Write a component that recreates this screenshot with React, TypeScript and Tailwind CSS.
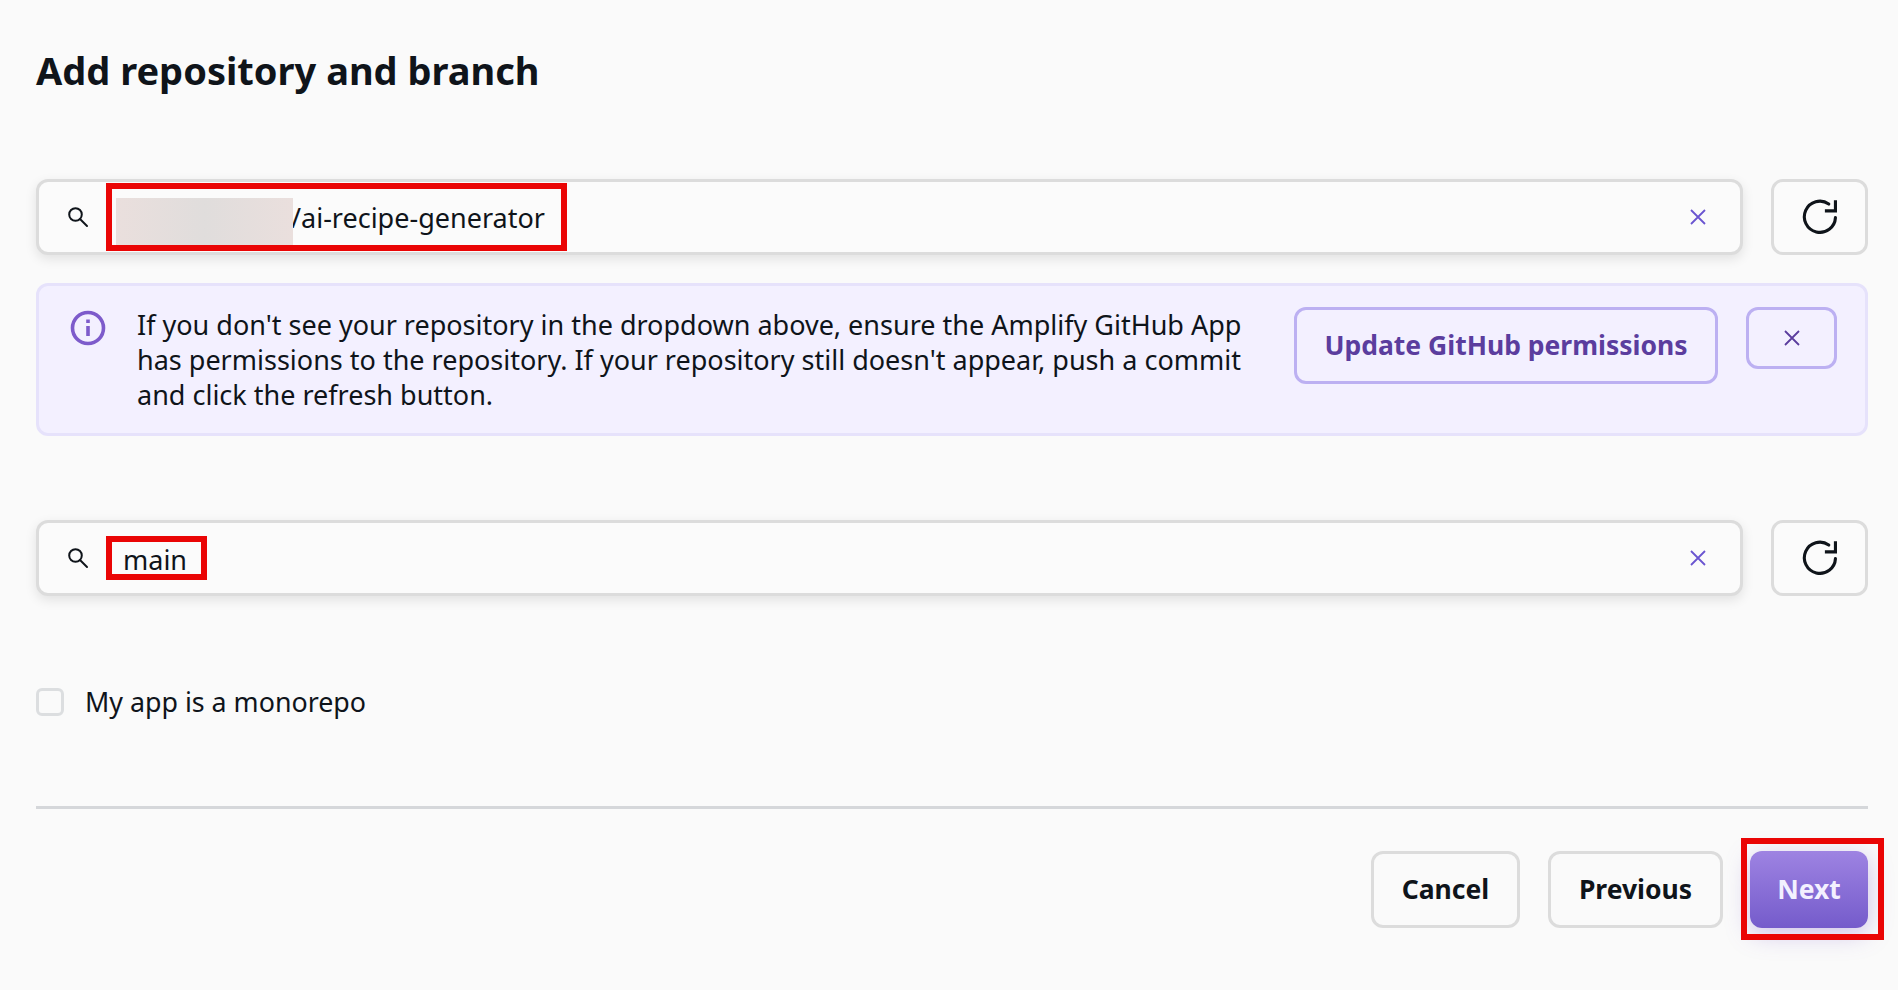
import React from 'react';

const font = { fontFamily: '"Noto Sans", sans-serif' };

const SearchIcon = () => (
  <svg width="24" height="24" viewBox="0 0 24 24" fill="none" stroke="#0f141a" strokeWidth="2">
    <circle cx="9.5" cy="9.5" r="6.3" />
    <path d="M14 14l7 7" strokeLinecap="round" />
  </svg>
);

const CloseIcon = ({ color, size = 18 }: { color: string; size?: number }) => (
  <svg width={size} height={size} viewBox="0 0 18 18" fill="none" stroke={color} strokeWidth="1.8">
    <path d="M2 2l14 14M16 2L2 16" />
  </svg>
);

const RefreshButton = () => (
  <button className="flex h-[76px] w-[97px] shrink-0 items-center justify-center rounded-xl border-[3px] border-[#dcdcdc] bg-[#fbfbfb]">
    <svg className="ml-[2px]" width="40" height="40" viewBox="0 0 36 36" fill="none" stroke="#0f141a" strokeWidth="2.8">
      <path d="M31 18.5A14 14 0 1 1 25 6.3" strokeLinecap="round" />
      <path d="M31 3v9.5h-9.5" />
    </svg>
  </button>
);

const SearchField = ({ children }: { children: React.ReactNode }) => (
  <div className="flex items-center gap-[15px] h-[76px] flex-1 rounded-xl border-[3px] border-[#dcdcdc] bg-[#fbfbfb] pl-[27px] pr-[33px] shadow-[0_4px_12px_rgba(0,0,0,0.1)]">
    <SearchIcon />
    <div className="flex-1 flex items-center">{children}</div>
    <CloseIcon color="#6a55d0" />
  </div>
);

const App: React.FC = () => (
  <div className="min-h-[990px] bg-[#fafafa] pl-9 pr-[30px] text-[#0f141a] overflow-hidden" style={font}>
    <h1 className="pt-[45px] text-[38px] leading-[50px] font-bold">Add repository and branch</h1>

    <div className="mt-[84px] flex gap-7">
      <SearchField>
        <div className="ml-[1px] flex h-[68px] w-[461px] items-center border-[6px] border-[#ea0505] pl-[2px]">
          <div className="relative z-10 mt-[8px] ml-[2px] h-[47px] w-[177px] bg-gradient-to-r from-[#eadfdd] via-[#e0dddc] to-[#eadfdd]" />
          <span className="-ml-[2px] pt-[3px] text-[27px]">/ai-recipe-generator</span>
        </div>
      </SearchField>
      <RefreshButton />
    </div>

    <div className="mt-[28px] flex h-[153px] rounded-xl border-[3px] border-[#e6e2fb] bg-[#f3f0ff] pl-[31px] pr-[28px] pt-[21px]">
      <svg className="mt-[3px] shrink-0" width="36" height="36" viewBox="0 0 36 36" fill="none" stroke="#7d5bcb" strokeWidth="3.6">
        <circle cx="18" cy="18" r="15.5" />
        <path d="M18 16v10" />
        <path d="M18 9.5v3.5" />
      </svg>
      <p className="ml-[31px] w-[1150px] text-[27px] leading-[35px]">
        If you don't see your repository in the dropdown above, ensure the Amplify GitHub App has permissions to the repository. If your repository still doesn't appear, push a commit and click the refresh button.
      </p>
      <button className="ml-auto flex h-[77px] w-[424px] shrink-0 items-center justify-center rounded-xl border-[3px] border-[#bcb0f2] text-[26.5px] font-bold text-[#5b3d9e]">
        Update GitHub permissions
      </button>
      <button className="ml-[28px] flex h-[62px] w-[91px] shrink-0 items-center justify-center rounded-xl border-[3px] border-[#bcb0f2]">
        <CloseIcon color="#5b3d9e" />
      </button>
    </div>

    <div className="mt-[84px] flex gap-7">
      <SearchField>
        <div className="ml-[1px] flex h-[44px] w-[101px] items-center border-[6px] border-[#ea0505] pl-[11px]">
          <span className="pt-[2px] text-[27px] leading-none">main</span>
        </div>
      </SearchField>
      <RefreshButton />
    </div>

    <label className="mt-[88px] flex items-center gap-[21px]">
      <span className="h-7 w-7 rounded-md border-[3px] border-[#dcdee0]" />
      <span className="text-[26.8px] leading-[35px]">My app is a monorepo</span>
    </label>

    <div className="mt-[87px] h-[3px] bg-[#d5d7da]" />

    <div className="mt-[42px] flex justify-end">
      <button className="flex h-[77px] w-[149px] items-center justify-center rounded-xl border-[3px] border-[#dcdcdc] text-[26.5px] font-bold">Cancel</button>
      <button className="ml-7 flex h-[77px] w-[175px] items-center justify-center rounded-xl border-[3px] border-[#dcdcdc] text-[26.5px] font-bold">Previous</button>
      <div className="relative ml-[27px] h-[77px] w-[118px]">
        <button className="flex h-full w-full items-center justify-center rounded-xl bg-gradient-to-b from-[#9e83e2] to-[#755bcb] text-[26.5px] font-bold text-[#f3f0ff] shadow-[0_6px_24px_rgba(125,91,203,0.35)]">Next</button>
        <div className="absolute -left-[9px] -top-[13px] -right-4 -bottom-3 border-[6px] border-[#ea0505]" />
      </div>
    </div>
  </div>
);

export default App;
